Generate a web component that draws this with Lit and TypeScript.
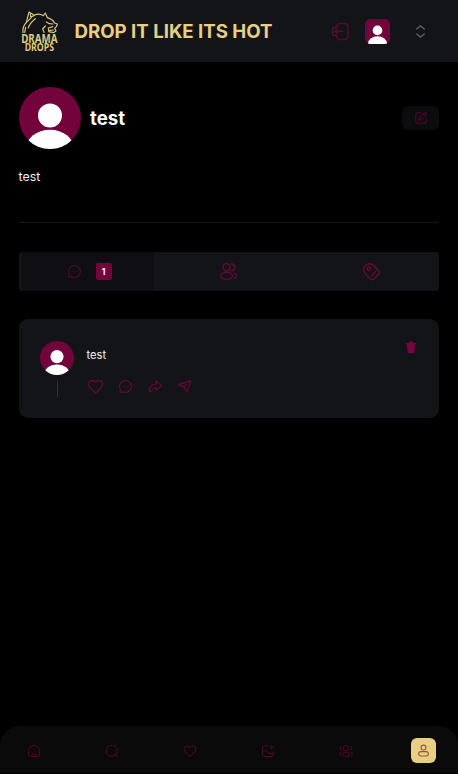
import { LitElement, html, css, svg } from "lit";
import { customElement, property } from "lit/decorators.js";

const icons: Record<string, unknown> = {
  logout: svg`<path d="M7.500 7V5C7.500 3 9 2 11 2h6c3 0 4.500 1.500 4.500 4.500v11c0 3-1.500 4.500-4.500 4.500h-6c-2 0-3.500-1-3.500-3v-2M7.500 7H3.500C2.500 7 2 7.500 2 8.500v7c0 1 .5 1.500 1.500 1.500h4M15 12H5M8 9.500L5 12l3 2.500"/>`,
  sort: svg`<path d="M6 8l6-5 6 5M6 16l6 5 6-5"/>`,
  edit: svg`<path d="M12 3H7C4 3 3 4 3 7v10c0 3 1 4 4 4h10c3 0 4-1 4-4v-5M8 16l1-4 9-9c2-1 4 1 3 3l-9 9zM16 5l3 3"/>`,
  reply: svg`<path d="M12 2.500a9.500 9.500 0 1 1-4.300 18L3 21.500l.7-4.800A9.500 9.500 0 0 1 12 2.500zM8 12h.1M12 12h.1M16 12h.1"/>`,
  people: svg`<circle cx="9.500" cy="6.500" r="4.500"/><ellipse cx="9.500" cy="17.500" rx="7.500" ry="4.500"/><path d="M16 2.500a4 4 0 0 1 0 8M19.500 14c3.500 1 3.500 5.500 0 6.500"/>`,
  tag: svg`<path d="M3.500 5.500C6 2.500 10 1.500 13 3c3 2 5 5 8 8 1.500 1.500 1.500 3 0 4.500l-6 6c-1.500 1.300-3 1.300-4.500 0C6 17 3 14 2.500 11.500 2 9 2 7 3.500 5.500zM12 17.500l6-6"/><circle cx="8.500" cy="8.500" r="2"/>`,
  heart: svg`<path d="M12 21C8 18 2 14 2 8.500 2 3.500 8 1.500 12 6c4-4.500 10-2.500 10 2.500C22 14 16 18 12 21z"/>`,
  share: svg`<path d="M13 8V3l9 7.500-9 7.500v-4c-2-.2-3.500.5-4 1.500C8 17 6 19.500 2.500 20.500 1 14 5 8 13 8z"/>`,
  send: svg`<path d="M2 9L22 3l-6 18-5-8zM11 13l5-5"/>`,
  trash: svg`<path fill="currentColor" stroke="none" d="M2 4h6l1-3h6l1 3h6v3H2zM4 7h16l-1.500 17h-13z"/>`,
  home: svg`<path d="M2.500 10c0-1.500.5-2.300 2-3.500l5-4c1.600-1 3.400-1 5 0l5 4c1.500 1.200 2 2 2 3.500v7c0 3-1.500 4.500-4.500 4.500H7c-3 0-4.500-1.500-4.500-4.500zM8 17.500h8"/>`,
  search: svg`<circle cx="11.500" cy="11.500" r="9.300"/><path d="M18 18l4 4"/>`,
  create: svg`<path d="M12 3H7C4 3 2.500 4.500 2.500 7v10C2.500 20 4 21.500 7 21.500h10c3 0 4.500-1.500 4.500-4.500v-5M18.500 2v7M15 5.500h7M3 12c5-2 7 0 10 3 2.500 2 5 2 8 1"/>`,
  community: svg`<circle cx="12" cy="7.500" r="4.800"/><ellipse cx="12" cy="18" rx="6" ry="4"/><path d="M4 4c-2.500 1-2.500 5 0 6M20 4c2.500 1 2.500 5 0 6M3 14c-2.500 1-2.500 5 0 6M21 14c2.500 1 2.500 5 0 6"/>`,
  user: svg`<circle cx="12" cy="6.500" r="4.500"/><rect x="3" y="14" width="18" height="8" rx="4"/>`,
};

@customElement("dd-icon")
class DdIcon extends LitElement {
  @property() name = "";
  @property({ type: Number }) size = 16;
  @property({ type: Number }) weight = 1.8;
  static styles = css`
    :host { display: block; flex: none; line-height: 0; }
    svg { display: block; fill: none; stroke: currentColor; stroke-linecap: round; stroke-linejoin: round; }
  `;
  render() {
    return html`<svg width=${this.size} height=${this.size} viewBox="0 0 24 24" stroke-width=${this.weight}>${icons[this.name]}</svg>`;
  }
}

@customElement("dd-avatar")
class DdAvatar extends LitElement {
  @property({ type: Number }) size = 62;
  static styles = css`
    :host { display: block; flex: none; border-radius: 50%; overflow: hidden; background: #72033b; }
    svg { display: block; }
  `;
  render() {
    return html`<svg width=${this.size} height=${this.size} viewBox="0 0 62 62" fill="#fff">
      <circle cx="31" cy="28.400" r="12"/><ellipse cx="31" cy="62" rx="24" ry="19.300"/>
    </svg>`;
  }
}

@customElement("app-root")
class AppRoot extends LitElement {
  static styles = css`
    :host {
      display: flex; flex-direction: column; height: 774px; background: #000; color: #fff;
      font-family: Inter, "Liberation Sans", sans-serif; --wine: #69073a; color-scheme: dark;
    }
    * { box-sizing: border-box; }
    header { height: 62px; background: #121417; display: flex; align-items: center; padding: 0 30px 0 16px; flex: none; }
    .logo { width: 50px; height: 50px; flex: none; }
    .title { margin: 0 auto 0 8.500px; font-size: 18.650px; font-weight: 700; color: #e8cf81; white-space: nowrap; line-height: 24px; }
    .exit { color: #5e0835; margin-right: 15px; }
    .square { border-radius: 5px; margin-right: 23px; }
    .sort { color: #56585c; }
    main { flex: 1; padding: 25px 19px 0 18.500px; }
    .profile { display: flex; align-items: center; }
    h1 { margin: 0 auto 0 9.500px; font-size: 18.700px; line-height: 24px; font-weight: 700; padding-top: 1px; }
    .edit { width: 37px; height: 24px; border-radius: 6px; background: #0b0c0e; color: #570529; display: grid; place-items: center; }
    .bio { margin: 19px 0 0; font-size: 12.400px; line-height: 18px; color: #f0f0f2; }
    .rule { height: 1px; background: #17181b; margin-top: 36px; }
    .tabs { display: grid; grid-template-columns: 135px 1fr 1fr; height: 39px; margin-top: 29px; border-radius: 4px; background: #121417; overflow: hidden; }
    .tab { display: flex; align-items: center; justify-content: center; gap: 14px; color: var(--wine); padding-left: 7px; }
    .tab.on { background: linear-gradient(90deg, #121417 3px, #0e0e13 3px); color: #56072f; padding-left: 6px; }
    .count { width: 16px; height: 17px; border-radius: 2px; background: #72033b; color: #fff; font-size: 8.500px; line-height: 18px; text-align: center; font-weight: 700; }
    .card { margin-top: 28px; height: 99px; border-radius: 9px; background: #121417; display: flex; padding: 21.500px 22.500px 0 21.500px; }
    .rail { display: flex; flex-direction: column; align-items: center; gap: 6px; }
    .line { width: 1px; height: 16px; background: #303236; }
    .body { flex: 1; margin-left: 12.500px; }
    .body p { margin: 6px 0 0; font-size: 11.200px; line-height: 17px; color: #f5f3e8; }
    .actions { display: flex; align-items: center; gap: 14.500px; margin: 14px 0 0; color: #6b073a; }
    .trash { color: #78043f; }
    nav { height: 47px; margin-bottom: 1px; background: #0a0a0a; border-radius: 20px 20px 0 0; display: flex; justify-content: space-between; align-items: center; padding: 2px 22px 0 21.500px; color: #4e0529; flex: none; }
    .slot { width: 25px; height: 25px; border-radius: 6px; display: grid; place-items: center; }
    .me { background: #e8cf81; color: #9b5348; }
  `;
  render() {
    return html`
      <header>
        <svg class="logo" viewBox="0 0 150 150" fill="none" stroke="#d9c47c" stroke-width="3.600" stroke-linecap="round" stroke-linejoin="round">
          <path d="M21 80C19 67 24 57 31 49L39 18L55 28C65 22 74 24 82 29L88 21L94 35C103 38 112 44 116 51L124 54L121 62L116 67L120 75L112 80L98 77"/>
          <path d="M31 49L46 35M91 48L100 53L111 54M110 62L97 66L98 74L112 72M88 60L80 69L84 79M58 38C47 47 39 55 37 66M29 64L26 79M43 23L44 33L54 29"/>
          <g fill="#dfca7b" stroke="none" font-family="Noto Sans" font-weight="700" text-anchor="middle">
            <text x="70" y="110" font-size="35" textLength="109" lengthAdjust="spacingAndGlyphs">DRAMA</text>
            <text x="70" y="136" font-size="31" textLength="88" lengthAdjust="spacingAndGlyphs">DROPS</text>
          </g>
        </svg>
        <div class="title">DROP IT LIKE ITS HOT</div>
        <dd-icon class="exit" name="logout" .size=${19}></dd-icon>
        <dd-avatar class="square" .size=${25}></dd-avatar>
        <dd-icon class="sort" name="sort" .size=${15} .weight=${2.6}></dd-icon>
      </header>
      <main>
        <section class="profile">
          <dd-avatar></dd-avatar>
          <h1>test</h1>
          <div class="edit"><dd-icon name="edit" .size=${14}></dd-icon></div>
        </section>
        <p class="bio">test</p>
        <div class="rule"></div>
        <div class="tabs">
          <div class="tab on"><dd-icon name="reply" .size=${15}></dd-icon><span class="count">1</span></div>
          <div class="tab"><dd-icon name="people" .size=${19}></dd-icon></div>
          <div class="tab"><dd-icon name="tag" .size=${19}></dd-icon></div>
        </div>
        <article class="card">
          <div class="rail"><dd-avatar .size=${34}></dd-avatar><div class="line"></div></div>
          <div class="body">
            <p>test</p>
            <div class="actions">
              <dd-icon name="heart" .size=${17}></dd-icon>
              <dd-icon name="reply" .size=${15}></dd-icon>
              <dd-icon name="share" .size=${15}></dd-icon>
              <dd-icon name="send" .size=${15}></dd-icon>
            </div>
          </div>
          <dd-icon class="trash" name="trash" .size=${12}></dd-icon>
        </article>
      </main>
      <nav>
        ${["home", "search", "heart", "create", "community"].map((n) => html`<div class="slot"><dd-icon name=${n} .size=${14}></dd-icon></div>`)}
        <div class="slot me"><dd-icon name="user" .size=${13} .weight=${2}></dd-icon></div>
      </nav>
    `;
  }
}
